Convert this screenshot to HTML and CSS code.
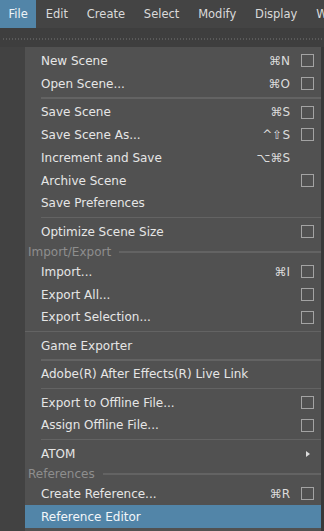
FILE: index.html
```html
<!DOCTYPE html>
<html>
<head>
<meta charset="utf-8">
<link rel="stylesheet" href="styles.css">
</head>
<body>
<div class="menubar">
  <span class="mb-item active">File</span>
  <span class="mb-item">Edit</span>
  <span class="mb-item">Create</span>
  <span class="mb-item">Select</span>
  <span class="mb-item">Modify</span>
  <span class="mb-item">Display</span>
  <span class="mb-item">Windows</span>
</div>
<div class="toolbar"><div class="dots"></div></div>
<div class="workspace">
  <div class="leftstrip"></div>
  <div class="menu">
    <div class="row"><span class="label">New Scene</span><span class="sc">⌘N</span><span class="opt"><span class="box"></span></span></div>
    <div class="row"><span class="label">Open Scene...</span><span class="sc">⌘O</span><span class="opt"><span class="box"></span></span></div>
    <div class="sep"></div>
    <div class="row"><span class="label">Save Scene</span><span class="sc">⌘S</span><span class="opt"><span class="box"></span></span></div>
    <div class="row"><span class="label">Save Scene As...</span><span class="sc">^⇧S</span><span class="opt"><span class="box"></span></span></div>
    <div class="row"><span class="label">Increment and Save</span><span class="sc">⌥⌘S</span><span class="opt"></span></div>
    <div class="row"><span class="label">Archive Scene</span><span class="sc"></span><span class="opt"><span class="box"></span></span></div>
    <div class="row"><span class="label">Save Preferences</span><span class="sc"></span><span class="opt"></span></div>
    <div class="sep"></div>
    <div class="row"><span class="label">Optimize Scene Size</span><span class="sc"></span><span class="opt"><span class="box"></span></span></div>
    <div class="header"><span>Import/Export</span><span class="hline"></span></div>
    <div class="row"><span class="label">Import...</span><span class="sc">⌘I</span><span class="opt"><span class="box"></span></span></div>
    <div class="row"><span class="label">Export All...</span><span class="sc"></span><span class="opt"><span class="box"></span></span></div>
    <div class="row"><span class="label">Export Selection...</span><span class="sc"></span><span class="opt"><span class="box"></span></span></div>
    <div class="sep full"></div>
    <div class="row"><span class="label">Game Exporter</span><span class="sc"></span><span class="opt"></span></div>
    <div class="sep"></div>
    <div class="row"><span class="label">Adobe(R) After Effects(R) Live Link</span><span class="sc"></span><span class="opt"></span></div>
    <div class="sep"></div>
    <div class="row"><span class="label">Export to Offline File...</span><span class="sc"></span><span class="opt"><span class="box"></span></span></div>
    <div class="row"><span class="label">Assign Offline File...</span><span class="sc"></span><span class="opt"><span class="box"></span></span></div>
    <div class="sep"></div>
    <div class="row"><span class="label">ATOM</span><span class="sc"></span><span class="opt"><span class="arrow"></span></span></div>
    <div class="header"><span>References</span><span class="hline"></span></div>
    <div class="row"><span class="label">Create Reference...</span><span class="sc">⌘R</span><span class="opt"><span class="box"></span></span></div>
    <div class="row selected"><span class="label">Reference Editor</span><span class="sc"></span><span class="opt"></span></div>
  </div>
  <div class="rightstrip"></div>
</div>
</body>
</html>
```
FILE: styles.css
```css
html, body {
  margin: 0;
  padding: 0;
  background: #3b3b3b;
  font-family: "DejaVu Sans", "Liberation Sans", sans-serif;
  overflow: hidden;
}
.menubar {
  height: 28px;
  background: #444444;
  display: flex;
  align-items: stretch;
  white-space: nowrap;
  overflow: hidden;
}
.mb-item {
  padding: 0 8.5px;
  font-size: 11.5px;
  line-height: 29px;
  color: #dadada;
  margin-right: 1.8px;
}
.mb-item.active {
  background: #5285a8;
  color: #eef3f7;
  margin-right: 1px;
}
.toolbar {
  height: 19px;
  background: #3e3e3e;
  padding-top: 10px;
  box-sizing: border-box;
}
.dots {
  height: 2px;
  margin: 0 2px;
  background-image: radial-gradient(circle, #5a5a5a 0.8px, transparent 1px);
  background-size: 3px 2px;
}
.workspace {
  display: flex;
  height: 484px;
}
.leftstrip {
  width: 25px;
  background: #424242;
}
.rightstrip {
  width: 3px;
  background: #383838;
}
.menu {
  flex: 1;
  background: #515151;
  padding-top: 2.6px;
  color: #e6e6e6;
  font-size: 12px;
}
.row {
  height: 22.8px;
  display: flex;
  align-items: center;
  padding: 0 7px 0 16px;
  white-space: nowrap;
}
.row.selected {
  background: #5285a8;
  color: #f2f6f9;
}
.label {
  flex: 1;
}
.sc {
  text-align: right;
  color: #dcdcdc;
}
.opt {
  width: 13px;
  height: 13px;
  margin-left: 11px;
  display: flex;
  align-items: center;
  justify-content: center;
}
.box {
  width: 13px;
  height: 13px;
  box-sizing: border-box;
  border: 1.5px solid #a3a3a3;
}
.arrow {
  width: 0;
  height: 0;
  border-top: 3.5px solid transparent;
  border-bottom: 3.5px solid transparent;
  border-left: 4.5px solid #dcdcdc;
}
.sep {
  height: 5.6px;
  display: flex;
  align-items: center;
  padding-left: 16px;
}
.sep::after {
  content: "";
  flex: 1;
  height: 1.5px;
  background: #636363;
}
.sep.full {
  padding-left: 0;
}
.header {
  height: 17.3px;
  display: flex;
  align-items: center;
  padding-left: 3px;
  color: #8e8e8e;
  gap: 8px;
}
.hline {
  flex: 1;
  height: 1.5px;
  background: #636363;
}
```
